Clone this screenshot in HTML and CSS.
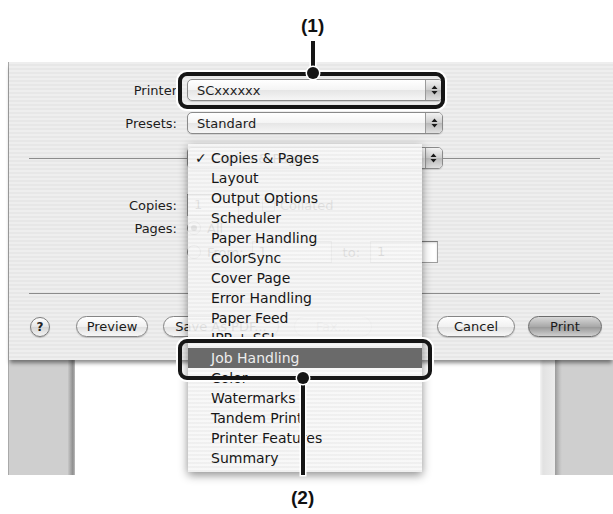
FILE: index.html
```html
<!DOCTYPE html>
<html>
<head>
<meta charset="utf-8">
<link rel="stylesheet" href="styles.css">
</head>
<body>
<div class="figure">
  <div class="cap cap-top"><span>(1)</span></div>
  <div class="screen">
    <div class="dialog">
      <div class="row row-printer">
        <span class="lbl">Printer</span>
        <div class="popup"><span class="ptxt">SCxxxxxx</span><span class="arrows"><svg width="7" height="12" viewBox="0 0 7 12"><path d="M3.5 1.5 L6.5 5 H0.5Z M3.5 10.5 L6.5 7 H0.5Z" fill="#1a1a1a"/></svg></span></div>
      </div>
      <div class="row row-presets">
        <span class="lbl">Presets:</span>
        <div class="popup"><span class="ptxt">Standard</span><span class="arrows"><svg width="7" height="12" viewBox="0 0 7 12"><path d="M3.5 1.5 L6.5 5 H0.5Z M3.5 10.5 L6.5 7 H0.5Z" fill="#1a1a1a"/></svg></span></div>
      </div>
      <div class="sep-row">
        <div class="sep-line"></div>
        <div class="popup popup-pane"><span class="ptxt">Copies &amp; Pages</span><span class="arrows"><svg width="7" height="12" viewBox="0 0 7 12"><path d="M3.5 1.5 L6.5 5 H0.5Z M3.5 10.5 L6.5 7 H0.5Z" fill="#1a1a1a"/></svg></span></div>
        <div class="sep-line"></div>
      </div>
      <div class="row row-copies">
        <span class="lbl">Copies:</span>
        <div class="field f-copies">1</div>
        <span class="checkbox"></span>
        <span class="cb-label">Collated</span>
      </div>
      <div class="row row-pages">
        <span class="lbl">Pages:</span>
        <span class="radio on"></span>
        <span class="r-label">All</span>
      </div>
      <div class="row row-from">
        <span class="lbl"></span>
        <span class="radio"></span>
        <span class="r-label">From:</span>
        <div class="field f-from">1</div>
        <span class="to-label">to:</span>
        <div class="field f-to">1</div>
      </div>
      <div class="sep"></div>
      <div class="buttons">
        <span class="help">?</span>
        <span class="btn b-preview">Preview</span>
        <span class="btn b-save">Save As PDF...</span>
        <span class="btn b-fax disabled">Fax...</span>
        <span class="spacer"></span>
        <span class="btn b-cancel">Cancel</span>
        <span class="btn b-print default">Print</span>
      </div>
    </div>
    <div class="backdrop">
      <div class="bd-left"></div>
      <div class="bd-shadow-l"></div>
      <div class="bd-page"></div>
      <div class="bd-strip"></div>
      <div class="bd-shadow-r"></div>
      <div class="bd-right"></div>
    </div>
  </div>
  <div class="cap cap-bottom"><span>(2)</span></div>

  <div class="menu">
    <div class="mi checked">Copies &amp; Pages</div>
    <div class="mi">Layout</div>
    <div class="mi">Output Options</div>
    <div class="mi">Scheduler</div>
    <div class="mi">Paper Handling</div>
    <div class="mi">ColorSync</div>
    <div class="mi">Cover Page</div>
    <div class="mi">Error Handling</div>
    <div class="mi">Paper Feed</div>
    <div class="mi">IPP + SSL</div>
    <div class="mi sel">Job Handling</div>
    <div class="mi">Color</div>
    <div class="mi">Watermarks</div>
    <div class="mi">Tandem Print</div>
    <div class="mi">Printer Features</div>
    <div class="mi">Summary</div>
  </div>

  <div class="lead lead-1"></div>
  <div class="hl hl-1"></div>
  <div class="dot dot-1"></div>
  <div class="lead lead-2"></div>
  <div class="hl hl-2"></div>
  <div class="dot dot-2"></div>
</div>
</body>
</html>
```

FILE: styles.css
```css
* { box-sizing: border-box; }
html, body { margin: 0; padding: 0; background: #fff; }
body { font-family: "DejaVu Sans", sans-serif; font-size: 13px; color: #1c1c1c; }

.figure { position: relative; width: 613px; height: 514px; overflow: hidden; }

.cap { font-family: "Liberation Sans", Arial, sans-serif; font-weight: bold; font-size: 19px; line-height: 1; color: #111; }
.cap-top { height: 62px; padding-top: 16px; padding-left: 301px; }
.cap-bottom { padding-top: 13px; padding-left: 291px; }

.screen { margin-left: 8px; height: 413px; border-left: 1px solid #a9a9a9; display: flex; flex-direction: column; }

.dialog {
  position: relative; z-index: 1;
  height: 298px; padding-top: 17px;
  background: repeating-linear-gradient(#eeeeee 0 2px, #e7e7e7 2px 4px);
  box-shadow: 0 4px 4px -1px rgba(0,0,0,.45);
}

.row { display: flex; align-items: center; }
.lbl { width: 168px; flex: none; text-align: right; }

.popup {
  margin-left: 10px; width: 256px; height: 22px; flex: none;
  border: 1px solid #8a8a8a; border-radius: 5px; overflow: hidden;
  background: linear-gradient(#ffffff, #f4f4f4 50%, #e6e6e6 52%, #f6f6f6);
  display: flex; align-items: center;
  box-shadow: 0 1px 1px rgba(0,0,0,.12);
}
.ptxt { flex: 1; padding-left: 9px; white-space: nowrap; }
.arrows {
  width: 17px; height: 100%; border-left: 1px solid #9a9a9a;
  background: linear-gradient(#f2f2f2, #cdcdcd 50%, #bababa 52%, #e0e0e0);
  display: flex; align-items: center; justify-content: center;
}

.row-printer { height: 22px; }
.row-presets { height: 22px; margin-top: 11px; }

.sep-row { display: flex; align-items: center; height: 22px; margin-top: 13px; padding: 0 13px 0 20px; }
.sep-line { flex: 1; height: 1px; background: #8c8c8c; }
.popup-pane { margin-left: 0; }
.popup-pane .ptxt { padding-left: 23px; }

.row-copies { height: 22px; margin-top: 25px; }
.field {
  height: 22px; margin-left: 10px; flex: none;
  background: #fff; border: 1px solid #9c9c9c; border-top-color: #7a7a7a;
  box-shadow: inset 0 1px 2px rgba(0,0,0,.15);
  padding-left: 6px; line-height: 20px;
}
.f-copies { width: 52px; }
.checkbox {
  width: 13px; height: 13px; margin-left: 23px; flex: none;
  border: 1px solid #8a8a8a; border-radius: 2px;
  background: linear-gradient(#fff, #dcdcdc);
}
.cb-label { margin-left: 5px; }

.row-pages { height: 18px; margin-top: 3px; }
.radio {
  width: 14px; height: 14px; margin-left: 10px; flex: none; border-radius: 50%;
  border: 1px solid #8a8a8a; background: linear-gradient(#fff, #dadada);
  display: flex; align-items: center; justify-content: center;
}
.radio.on::after { content: ""; width: 6px; height: 6px; border-radius: 50%; background: #333; }
.r-label { margin-left: 6px; }

.row-from { height: 22px; margin-top: 4px; }
.f-from { width: 80px; margin-left: 8px; }
.to-label { margin-left: 11px; }
.f-to { width: 68px; margin-left: 10px; }

.sep { height: 1px; margin: 30px 13px 0 20px; background: #8c8c8c; }

.buttons { display: flex; align-items: center; height: 21px; margin-top: 22px; padding: 0 11px 0 21px; }
.help {
  width: 20px; height: 20px; flex: none; border-radius: 50%;
  border: 1px solid #7d7d7d; background: linear-gradient(#ffffff, #e4e4e4 50%, #d6d6d6 52%, #f4f4f4);
  display: flex; align-items: center; justify-content: center;
  font-weight: bold; font-size: 12px; color: #222;
  box-shadow: 0 1px 1px rgba(0,0,0,.2);
}
.btn {
  height: 21px; flex: none; border-radius: 11px;
  border: 1px solid #858585;
  background: linear-gradient(#ffffff, #f1f1f1 50%, #e0e0e0 52%, #f7f7f7);
  display: flex; align-items: center; justify-content: center;
  white-space: nowrap; color: #1a1a1a;
  box-shadow: 0 1px 1px rgba(0,0,0,.18);
}
.b-preview { width: 72px; margin-left: 26px; }
.b-save { width: 116px; margin-left: 15px; }
.b-fax { width: 78px; margin-left: 15px; }
.btn.disabled { color: #b4b4b4; border-color: #c4c4c4; background: linear-gradient(#f8f8f8, #efefef); box-shadow: none; }
.spacer { flex: 1; }
.b-cancel { width: 78px; }
.b-print { width: 74px; margin-left: 13px; }
.btn.default {
  border-color: #6c6c6c;
  background: linear-gradient(#d8d8d8, #a9a9a9 50%, #979797 52%, #cfcfcf);
}

.backdrop { flex: 1; display: flex; }
.bd-left { width: 59px; background: #cfcfcf; }
.bd-shadow-l { width: 7px; background: linear-gradient(to right, #c8c8c8, #8e8e8e 70%, #bdbdbd); }
.bd-page { width: 465px; background: #fff; }
.bd-strip { width: 15px; background: linear-gradient(to right, #f4f4f4, #e2e2e2 20%, #ececec); }
.bd-shadow-r { width: 7px; background: linear-gradient(to right, #9a9a9a, #c4c4c4 70%, #cfcfcf); }
.bd-right { flex: 1; background: #cfcfcf; }

.menu {
  position: absolute; left: 188px; top: 144px; width: 234px; z-index: 5;
  padding: 4px 0;
  background: repeating-linear-gradient(rgba(247,247,247,.9) 0 2px, rgba(238,238,238,.9) 2px 4px);
  box-shadow: 0 3px 9px rgba(0,0,0,.45);
  font-size: 14px;
}
.mi { position: relative; height: 20px; line-height: 20px; padding-left: 23px; color: #161616; white-space: nowrap; }
.mi.checked::before { content: "\2713"; position: absolute; left: 7px; top: 0; }
.mi.sel { background: #6a6a6a; color: #ededed; }

.hl { position: absolute; z-index: 10; border: 4px solid #151515; border-radius: 9px; box-shadow: 0 0 0 2px #fff; }
.hl-1 { left: 178px; top: 72px; width: 267px; height: 37px; }
.hl-2 { left: 178px; top: 339px; width: 254px; height: 41px; }
.lead { position: absolute; z-index: 9; width: 4px; background: #151515; box-shadow: 0 0 0 1.5px #fff; }
.lead-1 { left: 311px; top: 41px; height: 33px; }
.lead-2 { left: 301px; top: 376px; height: 99px; }
.dot { position: absolute; z-index: 11; width: 12px; height: 12px; border-radius: 50%; background: #151515; box-shadow: 0 0 0 1.5px #fff; }
.dot-1 { left: 307px; top: 67px; }
.dot-2 { left: 297px; top: 372px; }
```
